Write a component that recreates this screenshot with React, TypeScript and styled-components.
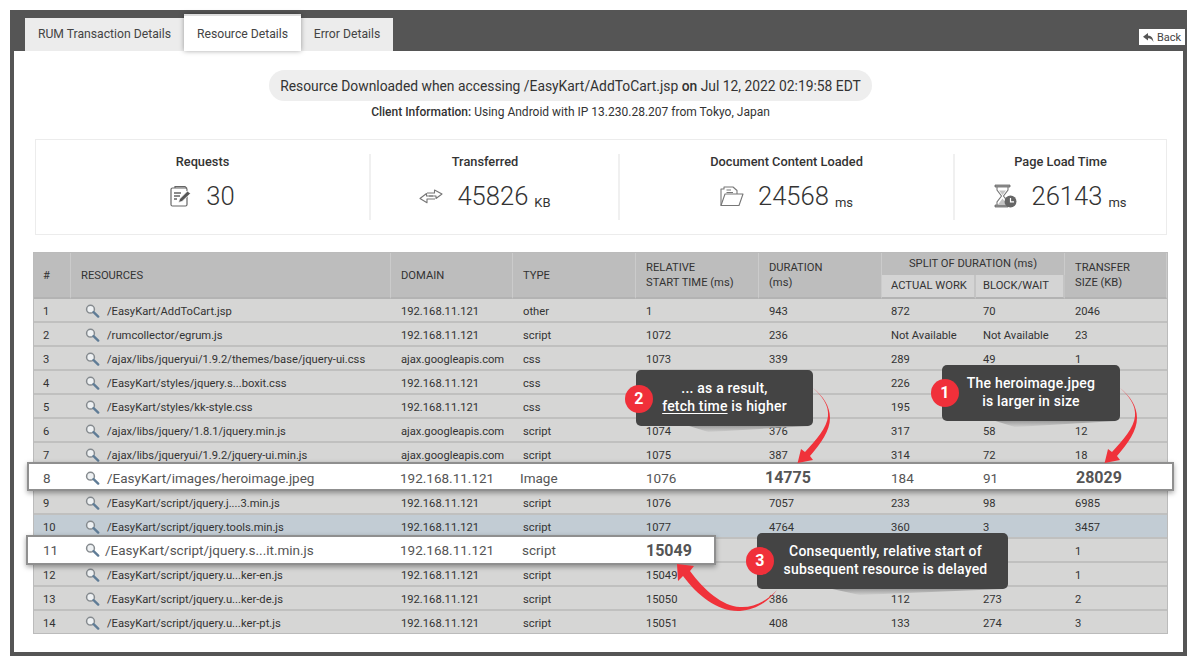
import React from 'react'
import styled, { createGlobalStyle, css } from 'styled-components'

const GlobalStyle = createGlobalStyle`
  html, body {
    margin: 0;
    background: #fff;
    font-family: Roboto, "Liberation Sans", sans-serif;
  }
`

const columns = '37px 320px 122px 123px 123px 123px 94px 89px 102px'

const Page = styled.div`
  position: relative;
  width: 1200px;
  height: 666px;
  overflow: hidden;
  padding: 10px 0 0 10px;
  box-sizing: border-box;
`
const Frame = styled.div`
  width: 1177px;
  height: 646px;
  box-sizing: border-box;
  background: #555;
  padding: 0 4px 4px;
  display: flex;
  flex-direction: column;
`
const TabBar = styled.div`
  height: 41px;
  flex: none;
  display: flex;
  align-items: flex-end;
  padding-left: 11px;
`
const Tab = styled.div<{ $active?: boolean; $width: number }>`
  box-sizing: border-box;
  width: ${(p) => p.$width}px;
  height: ${(p) => (p.$active ? 37 : 33)}px;
  background: ${(p) => (p.$active ? '#fff' : '#ececec')};
  color: #444;
  font-size: 12.2px;
  display: flex;
  align-items: center;
  justify-content: center;
  padding-bottom: ${(p) => (p.$active ? 0 : 2)}px;
  ${(p) =>
    p.$active &&
    css`
      border-top: 2px solid #ddd;
      box-shadow: 0 0 5px rgba(0, 0, 0, 0.35);
      position: relative;
    `}
`
const BackButton = styled.div`
  margin: 0 -2px 6px auto;
  width: 46px;
  height: 16px;
  background: #fff;
  color: #444;
  font-size: 11px;
  display: flex;
  align-items: center;
  justify-content: center;
  gap: 3px;
`
const Panel = styled.div`
  flex: 1;
  background: #fff;
  padding-top: 19px;
`
const Heading = styled.div`
  width: 1113px;
  display: flex;
  flex-direction: column;
  align-items: center;
`
const Pill = styled.div`
  width: 603px;
  height: 31px;
  border-radius: 16px;
  background: #eee;
  color: #333;
  font-size: 13.85px;
  display: flex;
  align-items: center;
  justify-content: center;
  white-space: pre;
  b {
    font-weight: 500;
  }
`
const ClientInfo = styled.div`
  margin-top: 4px;
  height: 14px;
  line-height: 14px;
  font-size: 12px;
  color: #333;
  white-space: pre;
  b {
    font-weight: 500;
  }
`
const Stats = styled.div`
  margin: 20px 0 0 21px;
  width: 1132px;
  height: 96px;
  box-sizing: border-box;
  border: 1px solid #ececec;
  padding: 14px 0;
  display: grid;
  grid-template-columns: 335px 249px 335px 211px;
`
const Stat = styled.div<{ $shift?: number; $last?: boolean }>`
  box-sizing: border-box;
  padding-right: ${(p) => p.$shift ?? 0}px;
  border-right: ${(p) => (p.$last ? 'none' : '2px solid #f0f0f0')};
  display: flex;
  flex-direction: column;
  align-items: center;
`
const StatTitle = styled.div`
  font-size: 12.8px;
  font-weight: 500;
  line-height: 16px;
  color: #333;
`
const StatValue = styled.div`
  margin-top: 8px;
  height: 36px;
  display: flex;
  align-items: center;
  gap: 14px;
  color: #333;
  font-size: 25.6px;
  font-weight: 300;
`
const Unit = styled.span`
  font-size: 13px;
  font-weight: 400;
  margin-left: 6px;
  position: relative;
  top: 2px;
`
const Table = styled.div`
  margin: 17px 0 0 19px;
  width: 1135px;
  box-sizing: border-box;
  border: 1px solid #bbb;
  color: #333;
  font-size: 11.2px;
`
const HeaderRow = styled.div`
  display: grid;
  grid-template-columns: ${columns};
  grid-template-rows: 22px 24px;
  background: #bdbdbd;
`
const HeaderCell = styled.div<{ $pad?: number }>`
  grid-row: span 2;
  box-sizing: border-box;
  padding-left: ${(p) => p.$pad ?? 10}px;
  border-right: 1px solid #cbcbcb;
  border-bottom: 2px solid #b3b3b3;
  display: flex;
  align-items: center;
  line-height: 15px;
  white-space: pre-line;
`
const SplitHead = styled.div`
  grid-column: span 2;
  text-align: center;
  line-height: 22px;
  border-right: 1px solid #cbcbcb;
`
const SubHead = styled.div<{ $pad: number }>`
  background: #d4d4d4;
  box-sizing: border-box;
  padding-left: ${(p) => p.$pad}px;
  border-right: 2px solid #c4c4c4;
  border-bottom: 2px solid #b3b3b3;
  line-height: 21px;
`
const Row = styled.div<{ $blue?: boolean }>`
  position: relative;
  height: 24px;
  box-sizing: border-box;
  padding-top: 2px;
  display: grid;
  grid-template-columns: ${columns};
  align-items: center;
  background: ${(p) => (p.$blue ? '#c2ccd4' : '#d6d6d5')};
  border-bottom: 2px solid #c0c0bf;
  &:last-child {
    height: 22px;
    border-bottom: 0;
  }
`
const HeroRow = styled(Row)`
  z-index: 1;
  height: 29px;
  margin: -5px -7px 0;
  padding: 2px 5px 0;
  background: #fff;
  border: 2px solid #8f8f8f;
  box-shadow: 0 2px 5px rgba(0, 0, 0, 0.35);
  font-size: 13.5px;
  color: #555;
`
const Strip = styled.div`
  position: absolute;
  z-index: 1;
  left: -8px;
  top: -4px;
  width: 690px;
  height: 30px;
  box-sizing: border-box;
  padding: 0 6px;
  display: grid;
  grid-template-columns: 37px 320px 122px 123px 1fr;
  align-items: center;
  background: #fff;
  border: 2px solid #8f8f8f;
  box-shadow: 0 2px 5px rgba(0, 0, 0, 0.35);
  font-size: 13.5px;
  color: #555;
`
const Cell = styled.div<{ $pad?: number }>`
  padding-left: ${(p) => p.$pad ?? 10}px;
  white-space: nowrap;
`
const ResourceCell = styled.div<{ $gap?: number }>`
  padding-left: 14px;
  display: flex;
  align-items: center;
  gap: ${(p) => p.$gap ?? 7}px;
  white-space: nowrap;
`
const Big = styled.span`
  font-size: 16px;
  font-weight: 700;
`
const Callout = styled.div<{ $left: number; $top: number; $width: number; $inset?: number }>`
  position: absolute;
  z-index: 2;
  left: ${(p) => p.$left}px;
  top: ${(p) => p.$top}px;
  width: ${(p) => p.$width}px;
  height: 56px;
  box-sizing: border-box;
  padding: 0 0 1px ${(p) => p.$inset ?? 0}px;
  border-radius: 5px;
  background: #444;
  color: #fff;
  font-size: 14px;
  font-weight: 500;
  letter-spacing: 0.2px;
  line-height: 17.5px;
  display: flex;
  align-items: center;
  justify-content: center;
  text-align: center;
  u {
    text-underline-offset: 2px;
  }
  &::after {
    content: '';
    position: absolute;
    left: 30%;
    right: 2%;
    top: 100%;
    height: 6px;
    background: linear-gradient(to bottom, #9c9c9c, rgba(170, 170, 170, 0.15));
    clip-path: polygon(0 0, 16% 100%, 100% 0);
  }
`
const Badge = styled.div<{ $top: number }>`
  position: absolute;
  left: -11px;
  top: ${(p) => p.$top}px;
  width: 28px;
  height: 28px;
  border-radius: 50%;
  background: #f0303a;
  color: #fff;
  font-size: 16px;
  font-weight: 700;
  display: flex;
  align-items: center;
  justify-content: center;
`
const Arrows = styled.svg`
  position: absolute;
  z-index: 3;
  left: 0;
  top: 0;
  pointer-events: none;
`

const Search = () => (
  <svg width="15" height="14" viewBox="0 0 15 14">
    <circle cx="5.5" cy="5.2" r="3.9" fill="#eef1f3" stroke="#858a8e" strokeWidth="1.5" />
    <path d="M8.6 8.2 L13.2 12.6" stroke="#5f7c96" strokeWidth="2.4" strokeLinecap="round" />
  </svg>
)

const RequestsIcon = () => (
  <svg width="22" height="22" viewBox="0 0 22 22" fill="none" stroke="#666" strokeWidth="1.2">
    <path d="M5 3 V1.6 H15 L17 3.4" />
    <path d="M17 9 V19.5 Q17 21 15.5 21 H2.5 Q1 21 1 19.5 V4.5 Q1 3 2.5 3 H15.5 Q17 3 17 4.5 V6" />
    <path d="M4 8 H11 M4 11 H10 M4 14 H7" strokeWidth="1.3" />
    <path d="M8.5 17.5 L9.5 14 L17.5 6 L20.5 8.5 L12 16.5 Z" fill="#555" stroke="#fff" strokeWidth="0.8" />
  </svg>
)
const TransferIcon = () => (
  <svg width="24" height="16" viewBox="0 0 24 16" fill="none" stroke="#777" strokeWidth="1.1" strokeLinejoin="round">
    <path d="M8 5 H15.5 V2 L23 6 L17 10.5 V8 H10" />
    <path d="M16 11 H8 V14.8 L1 10.5 L7.5 5.5 V8 H14" />
  </svg>
)
const FolderIcon = () => (
  <svg width="24" height="21" viewBox="0 0 24 21" fill="none" stroke="#777" strokeWidth="1.1" strokeLinejoin="round">
    <path d="M1 19.5 V3 H4 V1 H13 L17 4.5 V8" />
    <path d="M6.5 4 H11 M6.5 6.5 H13" />
    <path d="M1 19.5 L5 8 H23 L19 19.5 Z" />
  </svg>
)
const HourglassIcon = () => (
  <svg width="23" height="24" viewBox="0 0 23 24" fill="none">
    <path d="M1 1 H16 V3 H1 Z M1 21 H14 V23 H1 Z" fill="#999" stroke="#666" strokeWidth="0.8" />
    <path d="M3 3 V6 L7.5 12 L3 18 V21 M14 3 V6 L9.5 12 L12 15.5" stroke="#777" strokeWidth="1.1" />
    <path d="M5 6.5 H12 L8.5 11 Z M4 20.5 L8.5 14.5 L11 18 V20.5 Z" fill="#c4c4c4" />
    <circle cx="16.5" cy="17.5" r="6" fill="#666" />
    <path d="M16.5 14 V17.8 H20" stroke="#fff" strokeWidth="1.2" />
  </svg>
)
const ReplyIcon = () => (
  <svg width="11" height="9" viewBox="0 0 11 9">
    <path d="M5 0 L0 3.8 L5 7.4 V5.2 Q8.5 5 10.5 9 Q10 2.8 5 2.4 Z" fill="#555" />
  </svg>
)

// rel, duration, actual, block, transfer are left blank where the callouts cover them
type Data = [string, string, string, string, string, string, string, string, string]

const before: Data[] = [
  ['1', '/EasyKart/AddToCart.jsp', '192.168.11.121', 'other', '1', '943', '872', '70', '2046'],
  ['2', '/rumcollector/egrum.js', '192.168.11.121', 'script', '1072', '236', 'Not Available', 'Not Available', '23'],
  ['3', '/ajax/libs/jqueryui/1.9.2/themes/base/jquery-ui.css', 'ajax.googleapis.com', 'css', '1073', '339', '289', '49', '1'],
  ['4', '/EasyKart/styles/jquery.s...boxit.css', '192.168.11.121', 'css', '', '', '226', '', ''],
  ['5', '/EasyKart/styles/kk-style.css', '192.168.11.121', 'css', '', '', '195', '', ''],
  ['6', '/ajax/libs/jquery/1.8.1/jquery.min.js', 'ajax.googleapis.com', 'script', '1074', '376', '317', '58', '12'],
  ['7', '/ajax/libs/jqueryui/1.9.2/jquery-ui.min.js', 'ajax.googleapis.com', 'script', '1075', '387', '314', '72', '18'],
]
const row9: Data = ['9', '/EasyKart/script/jquery.j....3.min.js', '192.168.11.121', 'script', '1076', '7057', '233', '98', '6985']
const row10: Data = ['10', '/EasyKart/script/jquery.tools.min.js', '192.168.11.121', 'script', '1077', '4764', '360', '3', '3457']
const after: Data[] = [
  ['12', '/EasyKart/script/jquery.u...ker-en.js', '192.168.11.121', 'script', '15049', '', '', '', '1'],
  ['13', '/EasyKart/script/jquery.u...ker-de.js', '192.168.11.121', 'script', '15050', '386', '112', '273', '2'],
  ['14', '/EasyKart/script/jquery.u...ker-pt.js', '192.168.11.121', 'script', '15051', '408', '133', '274', '3'],
]

const RowCells = ({ data }: { data: Data }) => (
  <>
    <Cell $pad={9}>{data[0]}</Cell>
    <ResourceCell>
      <Search />
      {data[1]}
    </ResourceCell>
    <Cell>{data[2]}</Cell>
    <Cell>{data[3]}</Cell>
    <Cell>{data[4]}</Cell>
    <Cell>{data[5]}</Cell>
    <Cell $pad={9}>{data[6]}</Cell>
    <Cell $pad={7}>{data[7]}</Cell>
    <Cell>{data[8]}</Cell>
  </>
)

export default function App() {
  return (
    <Page>
      <GlobalStyle />
      <Frame>
        <TabBar>
          <Tab $width={159}>RUM Transaction Details</Tab>
          <Tab $width={117} $active>Resource Details</Tab>
          <Tab $width={92}>Error Details</Tab>
          <BackButton>
            <ReplyIcon />
            Back
          </BackButton>
        </TabBar>
        <Panel>
          <Heading>
            <Pill>
              Resource Downloaded when accessing /EasyKart/AddToCart.jsp <b>on</b> Jul 12, 2022 02:19:58 EDT
            </Pill>
            <ClientInfo>
              <b>Client Information:</b> Using Android with IP 13.230.28.207 from Tokyo, Japan
            </ClientInfo>
          </Heading>
          <Stats>
            <Stat>
              <StatTitle>Requests</StatTitle>
              <StatValue>
                <RequestsIcon />
                <span>30</span>
              </StatValue>
            </Stat>
            <Stat $shift={19}>
              <StatTitle>Transferred</StatTitle>
              <StatValue>
                <TransferIcon />
                <span>
                  45826<Unit>KB</Unit>
                </span>
              </StatValue>
            </Stat>
            <Stat>
              <StatTitle>Document Content Loaded</StatTitle>
              <StatValue>
                <FolderIcon />
                <span>
                  24568<Unit>ms</Unit>
                </span>
              </StatValue>
            </Stat>
            <Stat $last>
              <StatTitle>Page Load Time</StatTitle>
              <StatValue>
                <HourglassIcon />
                <span>
                  26143<Unit>ms</Unit>
                </span>
              </StatValue>
            </Stat>
          </Stats>
          <Table>
            <HeaderRow>
              <HeaderCell $pad={9}>#</HeaderCell>
              <HeaderCell>RESOURCES</HeaderCell>
              <HeaderCell>DOMAIN</HeaderCell>
              <HeaderCell>TYPE</HeaderCell>
              <HeaderCell>{'RELATIVE\nSTART TIME (ms)'}</HeaderCell>
              <HeaderCell>{'DURATION\n(ms)'}</HeaderCell>
              <SplitHead>SPLIT OF DURATION (ms)</SplitHead>
              <HeaderCell>{'TRANSFER\nSIZE (KB)'}</HeaderCell>
              <SubHead $pad={9}>ACTUAL WORK</SubHead>
              <SubHead $pad={7}>BLOCK/WAIT</SubHead>
            </HeaderRow>
            {before.map((data) => (
              <Row key={data[0]}>
                <RowCells data={data} />
              </Row>
            ))}
            <HeroRow>
              <Cell $pad={9}>8</Cell>
              <ResourceCell>
                <Search />
                /EasyKart/images/heroimage.jpeg
              </ResourceCell>
              <Cell $pad={9}>192.168.11.121</Cell>
              <Cell $pad={7}>Image</Cell>
              <Cell>1076</Cell>
              <Cell $pad={6}>
                <Big>14775</Big>
              </Cell>
              <Cell $pad={9}>184</Cell>
              <Cell $pad={7}>91</Cell>
              <Cell $pad={11}>
                <Big>28029</Big>
              </Cell>
            </HeroRow>
            <Row>
              <RowCells data={row9} />
            </Row>
            <Row $blue>
              <RowCells data={row10} />
            </Row>
            <Row>
              <Strip>
                <Cell $pad={9}>11</Cell>
                <ResourceCell $gap={5}>
                  <Search />
                  /EasyKart/script/jquery.s...it.min.js
                </ResourceCell>
                <Cell $pad={9}>192.168.11.121</Cell>
                <Cell $pad={9}>script</Cell>
                <Cell>
                  <Big>15049</Big>
                </Cell>
              </Strip>
              <RowCells data={['', '', '', '', '', '', '', '', '1']} />
            </Row>
            {after.map((data) => (
              <Row key={data[0]}>
                <RowCells data={data} />
              </Row>
            ))}
          </Table>
        </Panel>
      </Frame>

      <Callout $left={942} $top={365} $width={178}>
        <Badge $top={14}>1</Badge>
        <div>
          The heroimage.jpeg
          <br />
          is larger in size
        </div>
      </Callout>
      <Callout $left={636} $top={370} $width={177}>
        <Badge $top={15}>2</Badge>
        <div>
          ... as a result,
          <br />
          <u>fetch time</u> is higher
        </div>
      </Callout>
      <Callout $left={757} $top={533} $width={251} $inset={6}>
        <Badge $top={14}>3</Badge>
        <div>
          Consequently, relative start of
          <br />
          subsequent resource is delayed
        </div>
      </Callout>

      <Arrows width="1200" height="666" viewBox="0 0 1200 666">
        <g fill="#f0323a">
          <path
            id="curve"
            d="M813 388 C823 396 830 406 830 418 C830 431 821 443 810 456 L813 460 L797.6 463 L801 449 L805 452 C816 440 827 428 828 416 C829 405 822 396 813 388 Z"
          />
          <use href="#curve" x="307" />
          <path d="M777 590 C766 602 752 608 740 607 C722 606 704 590 690 571 L694 566 L677 564 L678 581 L683 576 C698 596 718 612 740 611 C755 610 768 602 777 590 Z" />
        </g>
      </Arrows>
    </Page>
  )
}
